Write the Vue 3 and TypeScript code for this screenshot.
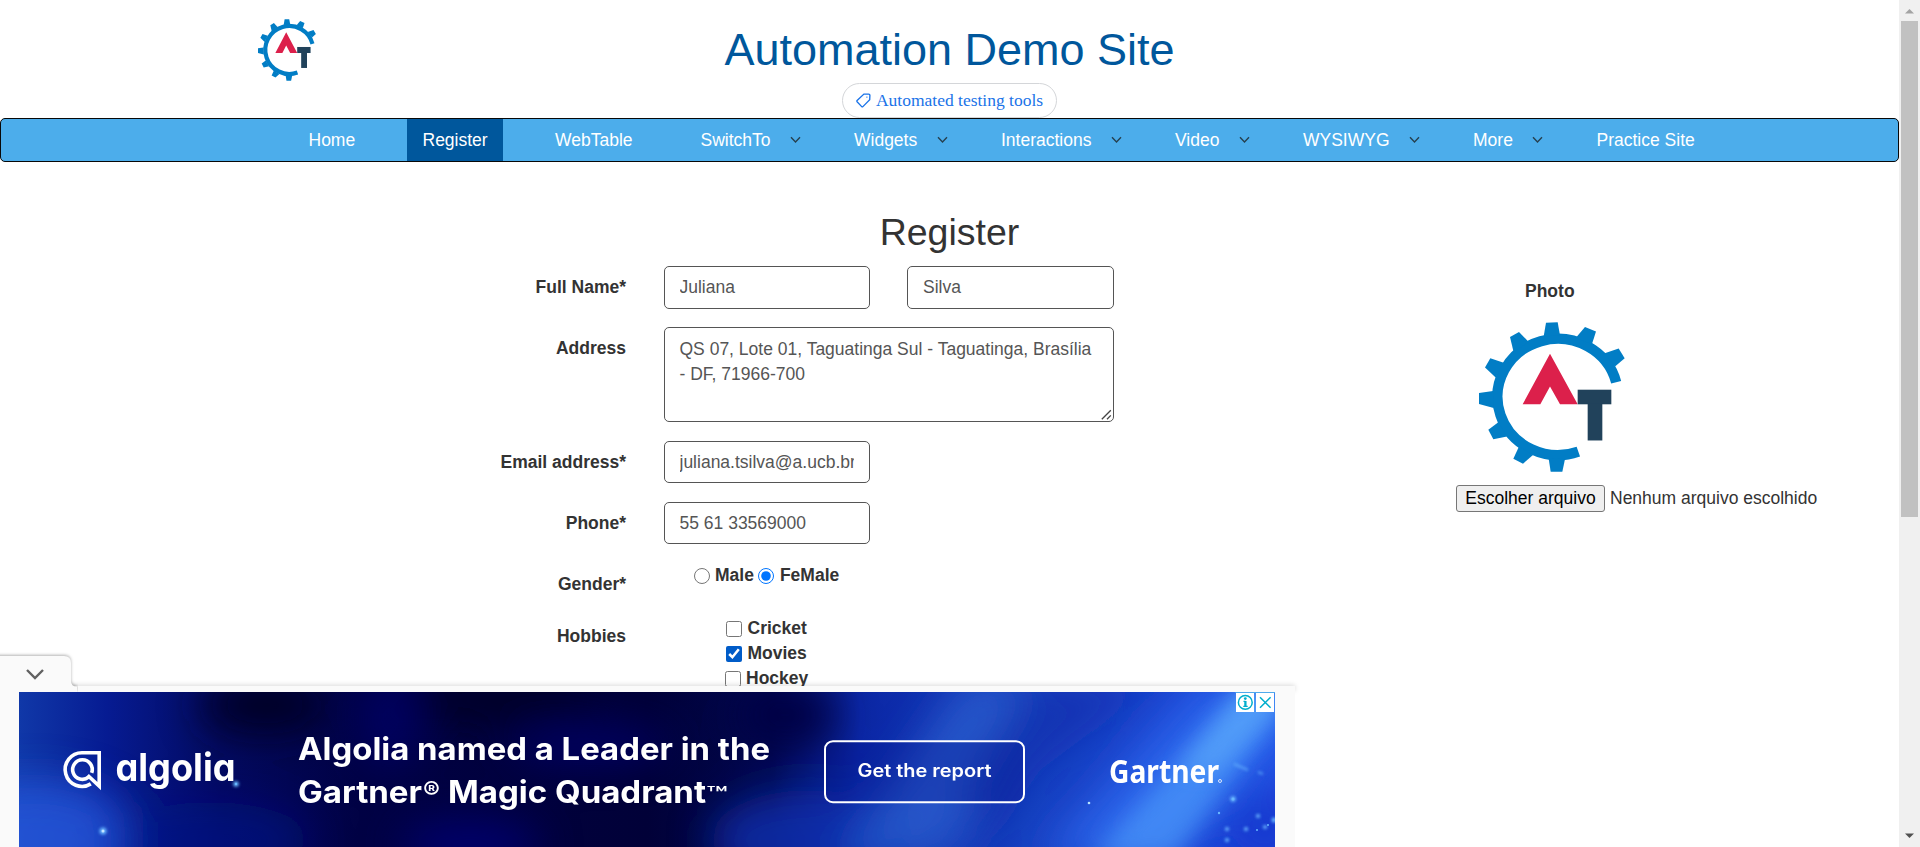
<script setup lang="ts">
import { ref } from 'vue'

interface NavItem {
  label: string
  active?: boolean
  menu?: boolean
}

const navItems: NavItem[] = [
  { label: 'Home' },
  { label: 'Register', active: true },
  { label: 'WebTable' },
  { label: 'SwitchTo', menu: true },
  { label: 'Widgets', menu: true },
  { label: 'Interactions', menu: true },
  { label: 'Video', menu: true },
  { label: 'WYSIWYG', menu: true },
  { label: 'More', menu: true },
  { label: 'Practice Site' },
]

const firstName = ref('Juliana')
const lastName = ref('Silva')
const address = ref('QS 07, Lote 01, Taguatinga Sul - Taguatinga, Brasília - DF, 71966-700')
const email = ref('juliana.tsilva@a.ucb.br')
const phone = ref('55 61 33569000')
const gender = ref('FeMale')
const hobbies = ref<string[]>(['Movies'])

const gearTeeth: string[] = [
  '319,157 354,156 361,195 312,199',
  '436,170 469,184 457,221 408,203',
  '537,235 555,264 526,289 493,250',
  '238,185 211,200 222,246 267,215',
  '152,264 136,292 168,322 192,278',
  '118,369 118,402 162,414 160,363',
  '146,480 161,508 202,500 176,457',
  '221,567 250,582 280,556 238,530',
  '333,606 368,606 376,568 327,566',
]
</script>

<template>
  <div class="screen">
    <svg class="defs" width="0" height="0">
      <symbol id="gear-logo" viewBox="118 155 438 452" preserveAspectRatio="none">
        <path d="M529.5 336.5A181 175 0 1 0 416 545.3" fill="none" stroke="#017dc5" stroke-width="31" />
        <polygon v-for="t in gearTeeth" :key="t" :points="t" fill="#017dc5" />
        <polygon points="331,251 414,403 361,403 331,349 302,403 249,403" fill="#dc204b" />
        <rect x="414" y="359" width="101" height="44" fill="#21425b" />
        <rect x="444" y="402" width="44" height="110" fill="#21425b" />
      </symbol>
    </svg>

    <main class="page">
      <header class="header">
        <svg class="logo"><use href="#gear-logo" /></svg>
        <div class="title-block">
          <h1>Automation Demo Site</h1>
          <a class="pill">
            <svg width="15" height="15" viewBox="0 0 15 15" fill="none" stroke="#1a73e8" stroke-width="1.35">
              <path d="M7.9 1.1H12.7Q13.9 1.1 13.9 2.3L13.7 6.7L6.9 13.6Q6.3 14.2 5.7 13.6L1.1 8.7Q.6 8.1 1.1 7.6Z" />
              <circle cx="10.9" cy="4.1" r=".7" fill="#1a73e8" stroke="none" />
            </svg>
            <span>Automated testing tools</span>
          </a>
        </div>
      </header>

      <nav class="nav">
        <a v-for="item in navItems" :key="item.label" class="nav-item" :class="{ active: item.active }">
          {{ item.label }}
          <svg v-if="item.menu" class="caret" width="11" height="8" viewBox="0 0 11 8">
            <path d="M1 1.3L5.5 5.9L10 1.3" fill="none" stroke="#26404f" stroke-width="1.4" />
          </svg>
        </a>
      </nav>

      <h2>Register</h2>

      <section class="content">
        <form class="form">
          <div class="row single">
            <label>Full Name*</label>
            <input v-model="firstName" class="control" type="text" />
            <input v-model="lastName" class="control" type="text" />
          </div>
          <div class="row tall">
            <label>Address</label>
            <div class="area-wrap">
              <textarea v-model="address" class="control area"></textarea>
              <svg class="grip" width="11" height="11" viewBox="0 0 11 11">
                <path d="M.8 10.2L9.8 1.2M6 10.2L9.8 6.4" stroke="#444" stroke-width="1.3" />
              </svg>
            </div>
          </div>
          <div class="row single">
            <label>Email address*</label>
            <input v-model="email" class="control low" type="text" />
          </div>
          <div class="row single">
            <label>Phone*</label>
            <input v-model="phone" class="control low" type="text" />
          </div>
          <div class="row short">
            <label>Gender*</label>
            <div class="radios">
              <input v-model="gender" type="radio" value="Male" /><span class="first">Male</span>
              <input v-model="gender" type="radio" value="FeMale" /><span>FeMale</span>
            </div>
          </div>
          <div class="row">
            <label>Hobbies</label>
            <div class="checks">
              <div><input v-model="hobbies" type="checkbox" value="Cricket" />Cricket</div>
              <div><input v-model="hobbies" type="checkbox" value="Movies" />Movies</div>
              <div class="shifted"><input v-model="hobbies" type="checkbox" value="Hockey" />Hockey</div>
            </div>
          </div>
        </form>

        <aside class="photo">
          <strong>Photo</strong>
          <svg class="photo-logo"><use href="#gear-logo" /></svg>
          <div class="file">
            <button type="button">Escolher arquivo</button>
            <span>Nenhum arquivo escolhido</span>
          </div>
        </aside>
      </section>
    </main>

    <div class="scrollbar">
      <svg width="21" height="21" viewBox="0 0 21 21"><path d="M6 13.5L10.5 9L15 13.5Z" fill="#a3a3a3" /></svg>
      <div class="thumb"></div>
      <svg class="down" width="21" height="21" viewBox="0 0 21 21"><path d="M6 7.5L10.5 12L15 7.5Z" fill="#505050" /></svg>
    </div>

    <div class="anchor">
      <svg class="tab" width="78" height="42" viewBox="0 0 78 42">
        <path class="tab-shape" d="M-5 6H64Q71 6 71 13V31Q71 36.5 77 36.5V42H-5Z" />
        <path d="M27 20L35 28L43 20" fill="none" stroke="#616161" stroke-width="2.4" />
      </svg>
      <div class="anchor-edge"></div>
      <div class="anchor-body">
        <svg class="ad" width="1256" height="155" viewBox="19 692 1256 155">
          <defs>
            <linearGradient id="base" x1="0" x2="1" y1="0" y2="0">
              <stop offset="0" stop-color="#1038a8" />
              <stop offset=".07" stop-color="#061b92" />
              <stop offset=".16" stop-color="#030a60" />
              <stop offset=".27" stop-color="#010245" />
              <stop offset=".5" stop-color="#010138" />
              <stop offset=".6" stop-color="#020850" />
              <stop offset=".67" stop-color="#0b27a5" />
              <stop offset=".8" stop-color="#173fc0" />
              <stop offset="1" stop-color="#1c45dc" />
            </linearGradient>
            <filter id="soft" x="-60%" y="-60%" width="220%" height="220%"><feGaussianBlur stdDeviation="20" /></filter>
            <filter id="mid" x="-60%" y="-60%" width="220%" height="220%"><feGaussianBlur stdDeviation="11" /></filter>
            <filter id="glow" x="-200%" y="-200%" width="500%" height="500%"><feGaussianBlur stdDeviation="1.4" /></filter>
          </defs>
          <rect x="19" y="692" width="1256" height="155" fill="url(#base)" />
          <g filter="url(#soft)">
            <ellipse cx="35" cy="840" rx="100" ry="60" fill="#2458dc" opacity=".8" />
            <ellipse cx="210" cy="840" rx="100" ry="38" fill="#04108a" opacity=".6" />
            <ellipse cx="265" cy="705" rx="65" ry="30" fill="#000028" />
            <ellipse cx="500" cy="700" rx="100" ry="24" fill="#000025" />
            <ellipse cx="390" cy="720" rx="30" ry="50" fill="#04047c" opacity=".5" />
            <ellipse cx="590" cy="745" rx="80" ry="18" fill="#020266" />
            <ellipse cx="470" cy="845" rx="70" ry="24" fill="#04046e" />
            <ellipse cx="810" cy="840" rx="100" ry="50" fill="#0c2fb0" opacity=".8" />
            <ellipse cx="785" cy="715" rx="50" ry="30" fill="#010345" />
            <path d="M965 680H1030L950 860H840Z" fill="#2b61d0" opacity=".75" />
            <path d="M1030 680H1160L1040 770L985 850L960 780Z" fill="#1231ac" opacity=".7" />
            <path d="M1205 680H1300V735L1160 860H1040Z" fill="#2e6df0" opacity=".8" />
            <ellipse cx="1265" cy="830" rx="45" ry="40" fill="#173bd0" />
          </g>
          <path d="M1250 680H1300L1175 860H1090Z" fill="#4d9cfb" opacity=".65" filter="url(#mid)" />
          <path d="M1240 692H1275V712L1215 770H1180Z" fill="#60adfa" opacity=".55" filter="url(#mid)" />
          <g fill="#69b7ff">
            <g filter="url(#glow)">
              <circle cx="103" cy="831" r="3.5" /><circle cx="236" cy="784" r="2.8" /><circle cx="1233" cy="799" r="2.8" />
              <path d="M1234 764L1248 770M1258 772L1263 774" stroke="#69b7ff" stroke-width="2" opacity=".7" />
              <circle cx="1227" cy="829" r="2" /><circle cx="1246" cy="829" r="2" /><circle cx="1258" cy="816" r="2" />
              <circle cx="1274" cy="820" r="2.5" /><circle cx="1265" cy="827" r="2" /><circle cx="1227" cy="840" r="2" />
            </g>
            <circle cx="103" cy="831" r="1.5" fill="#c7e6ff" /><circle cx="236" cy="784" r="1.2" />
            <circle cx="1089" cy="803" r="1.3" fill="#b7e5ff" /><circle cx="1219" cy="813" r="1.2" />
            <circle cx="1233" cy="799" r="1.5" /><circle cx="1268" cy="825" r="1" /><circle cx="1257" cy="830" r="1" />
          </g>

          <g fill="none" stroke="#fff" stroke-width="3.6">
            <path d="M90.8 783.9A16.8 16.8 0 1 1 82.4 752.8H99.2V786L87.6 775.2" />
            <path d="M88.6 777.2A9.8 9.8 0 1 1 91.7 772.8" />
          </g>
          <text class="wordmark" x="115.5" y="781" textLength="120" lengthAdjust="spacingAndGlyphs">algolia</text>

          <text class="headline" x="298" y="760" textLength="472" lengthAdjust="spacingAndGlyphs">Algolia named a Leader in the</text>
          <text class="headline" x="298" y="803" textLength="124" lengthAdjust="spacingAndGlyphs">Gartner</text>
          <text class="headline reg" x="423" y="799" textLength="17" lengthAdjust="spacingAndGlyphs">®</text>
          <text class="headline" x="448" y="803" textLength="258" lengthAdjust="spacingAndGlyphs">Magic Quadrant</text>
          <text class="headline tm" x="706" y="801" textLength="22" lengthAdjust="spacingAndGlyphs">™</text>

          <rect x="825" y="741.2" width="199" height="61" rx="8" fill="#07188e" fill-opacity=".3" stroke="#fff" stroke-width="2" />
          <text class="cta" x="857.5" y="777" textLength="134" lengthAdjust="spacingAndGlyphs">Get the report</text>
          <text class="gartner" x="1109" y="782.5" textLength="110" lengthAdjust="spacingAndGlyphs">Gartner</text>
          <circle cx="1220" cy="781" r="1.5" fill="none" stroke="#fff" stroke-width=".8" />

          <path d="M1235.5 692.5H1275" stroke="#4fa9ec" />
          <rect x="1236" y="693" width="18" height="19" fill="#fff" />
          <rect x="1256" y="693" width="18" height="19" fill="#fff" />
          <g fill="none" stroke="#00aecd" stroke-width="1.5">
            <circle cx="1245.3" cy="702.4" r="6.9" />
            <path d="M1245.4 701V706.3" stroke-width="2.3" />
            <path d="M1243.5 701.4H1245.5M1243.3 706.4H1247.7" stroke-width="1.1" />
            <path d="M1260 697.2L1270.6 707.8M1270.6 697.2L1260 707.8" />
          </g>
          <circle cx="1245.3" cy="698.6" r="1.4" fill="#00aecd" />
        </svg>
      </div>
    </div>
  </div>
</template>

<style>
body {
  margin: 0;
  overflow: hidden;
}
</style>

<style scoped>
.screen {
  position: relative;
  display: flex;
  width: 1920px;
  height: 847px;
  overflow: hidden;
  background: #fff;
  color: #333;
  font-family: "Liberation Sans", Arial, sans-serif;
  font-size: 17.5px;
  line-height: 25px;
}
.defs { position: absolute; }
.page { width: 1899px; height: 847px; overflow: hidden; }

.header {
  display: grid;
  grid-template-columns: 258px 1fr 258px;
  height: 118px;
  box-sizing: border-box;
  padding-top: 19px;
}
.logo { width: 58px; height: 62px; justify-self: end; margin-right: -58px; }
.title-block { display: flex; flex-direction: column; align-items: center; }
h1 {
  margin: 6px 0 8px;
  color: #00579c;
  font-size: 45px;
  font-weight: 400;
  line-height: 50px;
}
.pill {
  display: flex;
  align-items: center;
  justify-content: center;
  gap: 5px;
  box-sizing: border-box;
  width: 215px;
  height: 35px;
  border: 1px solid #d4d6d9;
  border-radius: 18px;
  color: #1a73e8;
  font-family: "Liberation Serif", "Times New Roman", serif;
  font-size: 17.5px;
  white-space: nowrap;
}

.nav {
  display: grid;
  grid-template-columns: 114.5px 132px 145.5px 153.5px 147px 174px 128px 170px 123.5px 130px;
  box-sizing: border-box;
  height: 44px;
  padding-left: 291.5px;
  border: 1px solid #080808;
  border-radius: 5px;
  background: #4cadeb;
  color: #fff;
}
.nav-item {
  display: flex;
  align-items: center;
  justify-self: start;
  box-sizing: border-box;
  padding: 1px 15px 0 16px;
  white-space: nowrap;
}
.nav-item.active { width: 96px; padding-left: 15.5px; background: #00579c; }
.caret { margin: -1px 0 0 19.5px; }

h2 {
  margin: 50px 0 13px;
  font-size: 37.5px;
  font-weight: 400;
  line-height: 41px;
  text-align: center;
}
.content { display: flex; }
.form { width: 1456px; }
.row {
  display: grid;
  grid-template-columns: 626px 206px 207px;
  column-gap: 37.5px;
  align-items: start;
  font-weight: 700;
}
.row.single { height: 61px; }
.row.tall { height: 114px; }
.row.short { height: 52px; }
.row > label { padding-top: 9px; text-align: right; }
.control {
  box-sizing: border-box;
  width: 100%;
  height: 43px;
  margin: 0;
  padding: 7px 15px;
  border: 1px solid #555;
  border-radius: 5px;
  outline: none;
  background: #fff;
  color: #555;
  font: 400 17.5px/25px "Liberation Sans", Arial, sans-serif;
}
.control.low { height: 42px; }
.area-wrap { position: relative; grid-column: 2 / 4; height: 95px; }
.control.area { display: block; height: 95px; padding: 9px 15px 0; resize: none; overflow: hidden; }
.grip { position: absolute; right: 2px; bottom: 2px; }
.radios {
  display: flex;
  align-items: center;
  grid-column: 2 / 4;
  padding-left: 30px;
}
.radios input { width: 16px; height: 16px; margin: 0 5.5px 0 0; }
.radios .first { margin-right: 4.5px; }
.checks { padding: 1px 0 0 62.5px; }
.checks div { display: flex; align-items: center; }
.checks .shifted { margin-left: -1.5px; }
.checks input { width: 16px; height: 16px; margin: 0 5.5px 0 0; accent-color: #005cc8; }

.photo { flex: 1; padding-top: 13px; }
.photo strong { display: block; margin-left: 69px; }
.photo-logo { display: block; width: 146px; height: 150px; margin: 18px 0 13px 23px; }
.file { display: flex; align-items: center; gap: 5px; white-space: nowrap; }
.file button {
  box-sizing: border-box;
  width: 149px;
  height: 27px;
  padding: 0;
  border: 1px solid #767676;
  border-radius: 3px;
  background: #efefef;
  color: #000;
  font: 400 17.5px/23px "Liberation Sans", Arial, sans-serif;
}

.scrollbar {
  display: flex;
  flex-direction: column;
  width: 21px;
  height: 847px;
  background: #f0f0f0;
}
.thumb { width: 17px; height: 496px; margin-left: 2px; background: #c1c1c1; }
.down { margin-top: auto; }

.anchor { position: absolute; left: 0; bottom: 0; width: 1295px; height: 161px; }
.tab { position: absolute; left: 0; top: -36px; z-index: 2; }
.tab-shape { fill: #fafafa; filter: drop-shadow(0 -1px 1.5px rgba(0, 0, 0, 0.3)); }
.anchor-edge {
  height: 6px;
  background: #fafafa;
  box-shadow: 0 -1px 5px rgba(0, 0, 0, 0.15);
}
.anchor-body { height: 155px; padding-left: 19px; background: #fafafa; position: relative; z-index: 1; width: 1276px; }
.ad { display: block; }
.ad text { fill: #fff; font-family: Inter, "Noto Sans", sans-serif; }
.headline { font-size: 31px; font-weight: 700; }
.ad .reg { font-size: 24px; font-weight: 600; }
.ad .tm { font-size: 20px; font-weight: 500; }
.wordmark { font-size: 38px; font-weight: 700; font-feature-settings: "cv11"; }
.cta { font-size: 18px; font-weight: 600; }
.ad .gartner { font-family: "Noto Sans", "Open Sans", sans-serif; font-size: 33px; font-weight: 700; }
</style>
